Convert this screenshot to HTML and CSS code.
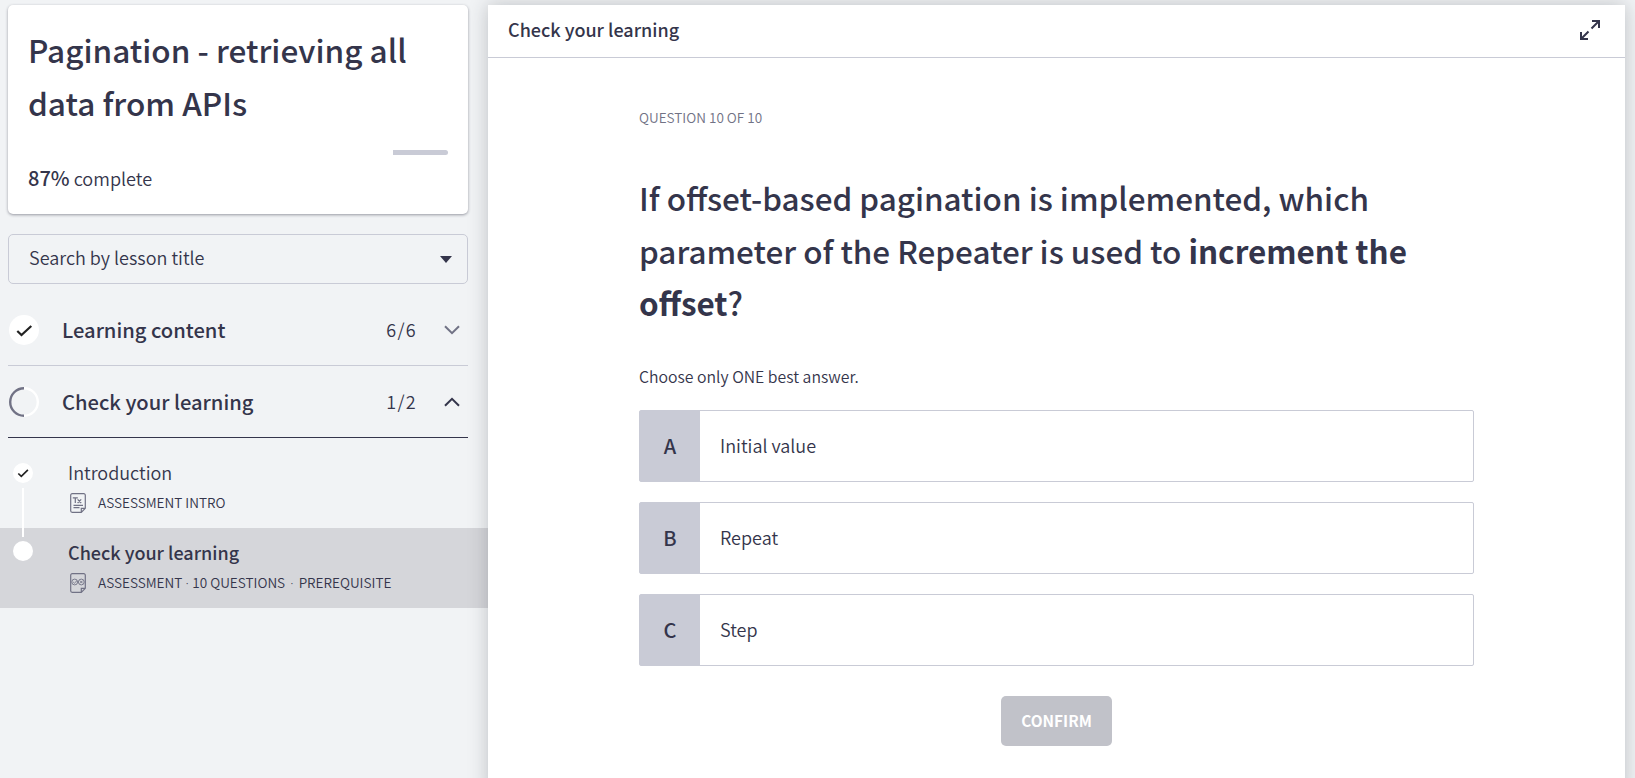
FILE: index.html
```html
<!DOCTYPE html>
<html lang="en">
<head>
<meta charset="utf-8">
<title>Pagination - retrieving all data from APIs</title>
<link rel="stylesheet" href="styles.css">
</head>
<body>
<aside class="sidebar">
  <section class="course-card">
    <h1 class="course-title">Pagination - retrieving all<br>data from APIs</h1>
    <div class="progress"><div class="progress-rest"></div></div>
    <p class="progress-label"><strong>87%</strong> complete</p>
  </section>
  <div class="search"><span>Search by lesson title</span>
    <svg width="12" height="7" viewBox="0 0 12 7"><path d="M0 0h12L6 7z" fill="#34354b"/></svg>
  </div>
  <div class="section">
    <svg width="30" height="30" viewBox="0 0 30 30"><circle cx="15" cy="15" r="15" fill="#fff"/><path d="M8.3 16l4.2 4 9.8-9" fill="none" stroke="#222" stroke-width="2.2"/></svg>
    <span class="section-name">Learning content</span><span class="section-count">6/6</span>
    <svg width="16" height="10" viewBox="0 0 16 10"><path d="M1 1.2l7 7 7-7" fill="none" stroke="#717285" stroke-width="2"/></svg>
  </div>
  <div class="section open">
    <svg width="30" height="30" viewBox="0 0 30 30"><path d="M15 1.2a13.8 13.8 0 0 1 0 27.6" fill="none" stroke="#fff" stroke-width="2.4"/><path d="M15 1.2a13.8 13.8 0 0 0 0 27.6" fill="none" stroke="#717285" stroke-width="2.4"/></svg>
    <span class="section-name">Check your learning</span><span class="section-count">1/2</span>
    <svg width="16" height="10" viewBox="0 0 16 10"><path d="M1 8.8l7-7 7 7" fill="none" stroke="#34354b" stroke-width="2"/></svg>
  </div>
  <ul class="lessons">
    <li class="lesson">
      <div class="rail"><svg width="20" height="20" viewBox="0 0 20 20"><circle cx="10" cy="10" r="10" fill="#fff"/><path d="M5.3 10.5l3 2.8 6.6-6.4" fill="none" stroke="#222" stroke-width="1.7"/></svg><i class="rail-line"></i></div>
      <div class="lesson-text"><span class="lesson-title">Introduction</span>
        <span class="lesson-meta"><svg width="16" height="20" viewBox="0 0 16 20" fill="none" stroke="#717285" stroke-width="1.2"><path d="M2.2.7h11.6a1.5 1.5 0 0 1 1.5 1.5v13.1l-4 4H2.2a1.5 1.5 0 0 1-1.5-1.5V2.2A1.5 1.5 0 0 1 2.2.7zM15.2 15.4h-3.9v3.8"/><path d="M2.8 4.8h5M5.3 4.8v5.2M7.6 6.3l3.6 3.7M11.2 6.3L7.6 10M3.5 12.4h9.5M3.5 14.6h6"/></svg><span class="meta-text">ASSESSMENT INTRO</span></span></div>
    </li>
    <li class="lesson current">
      <div class="rail"><svg width="20" height="20" viewBox="0 0 20 20"><circle cx="10" cy="10" r="10" fill="#fff"/></svg></div>
      <div class="lesson-text"><span class="lesson-title">Check your learning</span>
        <span class="lesson-meta"><svg width="16" height="20" viewBox="0 0 16 20" fill="none" stroke="#717285" stroke-width="1.2"><path d="M2.2.7h11.6a1.5 1.5 0 0 1 1.5 1.5v13.1l-4 4H2.2a1.5 1.5 0 0 1-1.5-1.5V2.2A1.5 1.5 0 0 1 2.2.7zM15.2 15.4h-3.9v3.8"/><g stroke-width=".9"><circle cx="4.7" cy="9" r="2.9"/><circle cx="11.3" cy="9" r="2.9"/><path d="M3.2 9l1.2 1.2 2.6-2.6M10 7.7l2.6 2.6M12.6 7.7L10 10.3"/></g></svg><span class="meta-text">ASSESSMENT<span class="dot">·</span>10 QUESTIONS<span class="dot wide">·</span>PREREQUISITE</span></span></div>
    </li>
  </ul>
</aside>
<main class="panel">
  <header class="panel-header"><span>Check your learning</span>
    <svg width="20" height="20" viewBox="0 0 20 20" fill="none" stroke="#34354b" stroke-width="2"><path d="M12 1h7v7M19 1l-7.5 7.5M8 19H1v-7M1 19l7.5-7.5"/></svg>
  </header>
  <div class="question">
    <p class="counter">QUESTION 10 OF 10</p>
    <h2 class="prompt">If offset-based pagination is implemented, which<br>parameter of the Repeater is used to <b>increment the</b><br><b>offset</b>?</h2>
    <p class="hint">Choose only ONE best answer.</p>
    <div class="options">
      <div class="option"><span class="key">A</span><span class="answer">Initial value</span></div>
      <div class="option"><span class="key">B</span><span class="answer">Repeat</span></div>
      <div class="option"><span class="key">C</span><span class="answer">Step</span></div>
    </div>
    <button class="confirm">CONFIRM</button>
  </div>
</main>
</body>
</html>
```
FILE: styles.css
```css
* { box-sizing: border-box; margin: 0; padding: 0; }
body {
  display: flex;
  height: 778px;
  overflow: hidden;
  background: #f1f3f5;
  color: #34354b;
  font-family: "Noto Sans CJK SC", "Noto Sans", sans-serif;
  font-size: 18px;
}
svg { display: block; flex: none; }
.sidebar { width: 488px; padding-top: 5px; flex: none; }
.course-card {
  width: 460px;
  height: 209px;
  margin-left: 8px;
  padding: 18px 20px 0;
  background: #fff;
  border-radius: 5px;
  box-shadow: 0 1px 3px rgba(40, 42, 60, .45);
}
.course-title { font-size: 31.55px; line-height: 53px; font-weight: 500; white-space: nowrap; }
.progress { display: flex; justify-content: flex-end; margin-top: 21px; }
.progress-rest { width: 55px; height: 5px; background: #c9cbd6; border-radius: 0 3px 3px 0; }
.progress-label { line-height: 30px; margin-top: 8px; font-weight: 350; font-size: 18.1px; }
.progress-label strong { font-weight: 500; font-size: 20px; }
.search {
  display: flex; align-items: center; justify-content: space-between;
  width: 460px; height: 50px; margin: 20px 0 0 8px; padding: 0 15px 0 20px;
  border: 1px solid #c9cbd6; border-radius: 5px;
  font-weight: 350;
}
.search span { padding-bottom: 4px; }
.section {
  display: flex; align-items: center;
  width: 460px; height: 72px; margin-left: 8px; padding: 0 8px 0 1px;
  border-bottom: 1px solid #c9cbd6;
}
.search + .section { margin-top: 10px; }
.section.open { border-color: #34354b; }
.section-name { flex: 1; margin-left: 23px; font-size: 20.15px; font-weight: 500; }
.section-count { margin-right: 27px; padding-bottom: 2px; font-weight: 350; letter-spacing: 1.3px; }
.lessons { list-style: none; padding-top: 10px; }
.lesson { display: flex; height: 80px; padding: 13px 0 0 13px; }
.rail { position: relative; width: 20px; margin-right: 35px; flex: none; padding-top: 2px; }
.current .rail { padding-top: 0; }
.rail-line { position: absolute; left: 9px; top: 27px; width: 2px; height: 49px; background: #fff; z-index: 1; }
.current { background: #d5d6da; }
.lesson-text { display: flex; flex-direction: column; margin-top: -1px; }
.lesson-title { line-height: 24px; font-weight: 350; }
.current .lesson-title { font-weight: 500; }
.lesson-meta { display: flex; align-items: center; margin-top: 9px; padding-left: 2px; gap: 12px; height: 20px; font-size: 13.55px; font-weight: 350; white-space: nowrap; }
.meta-text { line-height: 20px; padding-bottom: 2px; }
.dot { display: inline-block; width: 10px; text-align: center; font-family: "Noto Sans", sans-serif; line-height: 1; }
.dot.wide { width: 13.5px; }
.panel {
  width: 1137px; height: 790px; margin-top: 5px; flex: none;
  background: #fff;
  box-shadow: 0 0 18px rgba(40, 42, 50, .25);
}
.panel-header {
  display: flex; align-items: center; justify-content: space-between;
  height: 53px; padding: 0 25px 2px 20px; border-bottom: 1px solid #c9cbd6;
  font-weight: 500;
}
.panel-header span { padding-bottom: 2px; }
.question { display: flex; flex-direction: column; width: 835px; margin: 0 auto; }
.counter { margin-top: 46px; font-size: 13.55px; line-height: 26px; font-weight: 350; color: #717285; }
.prompt { height: 158px; margin-top: 42px; font-size: 31.45px; line-height: 52.6px; font-weight: 500; white-space: nowrap; }
.prompt b { font-weight: 700; }
.hint { margin-top: 34px; font-size: 15.8px; line-height: 26px; font-weight: 350; }
.options { display: grid; gap: 20px; margin-top: 20px; }
.option { display: flex; height: 72px; border: 1px solid #c9cbd6; border-radius: 2px; }
.key { display: grid; place-items: center; width: 60px; padding-bottom: 1px; background: #c9cbd6; font-size: 20px; font-weight: 500; }
.answer { margin-left: 20px; line-height: 68px; font-weight: 350; }
.confirm {
  width: 111px; height: 50px; margin: 30px auto 0; padding-bottom: 2px; border: 0; border-radius: 5px;
  background: #c1c2c9; color: #fff; font: 700 15.4px "Noto Sans CJK SC", sans-serif;
}
```
